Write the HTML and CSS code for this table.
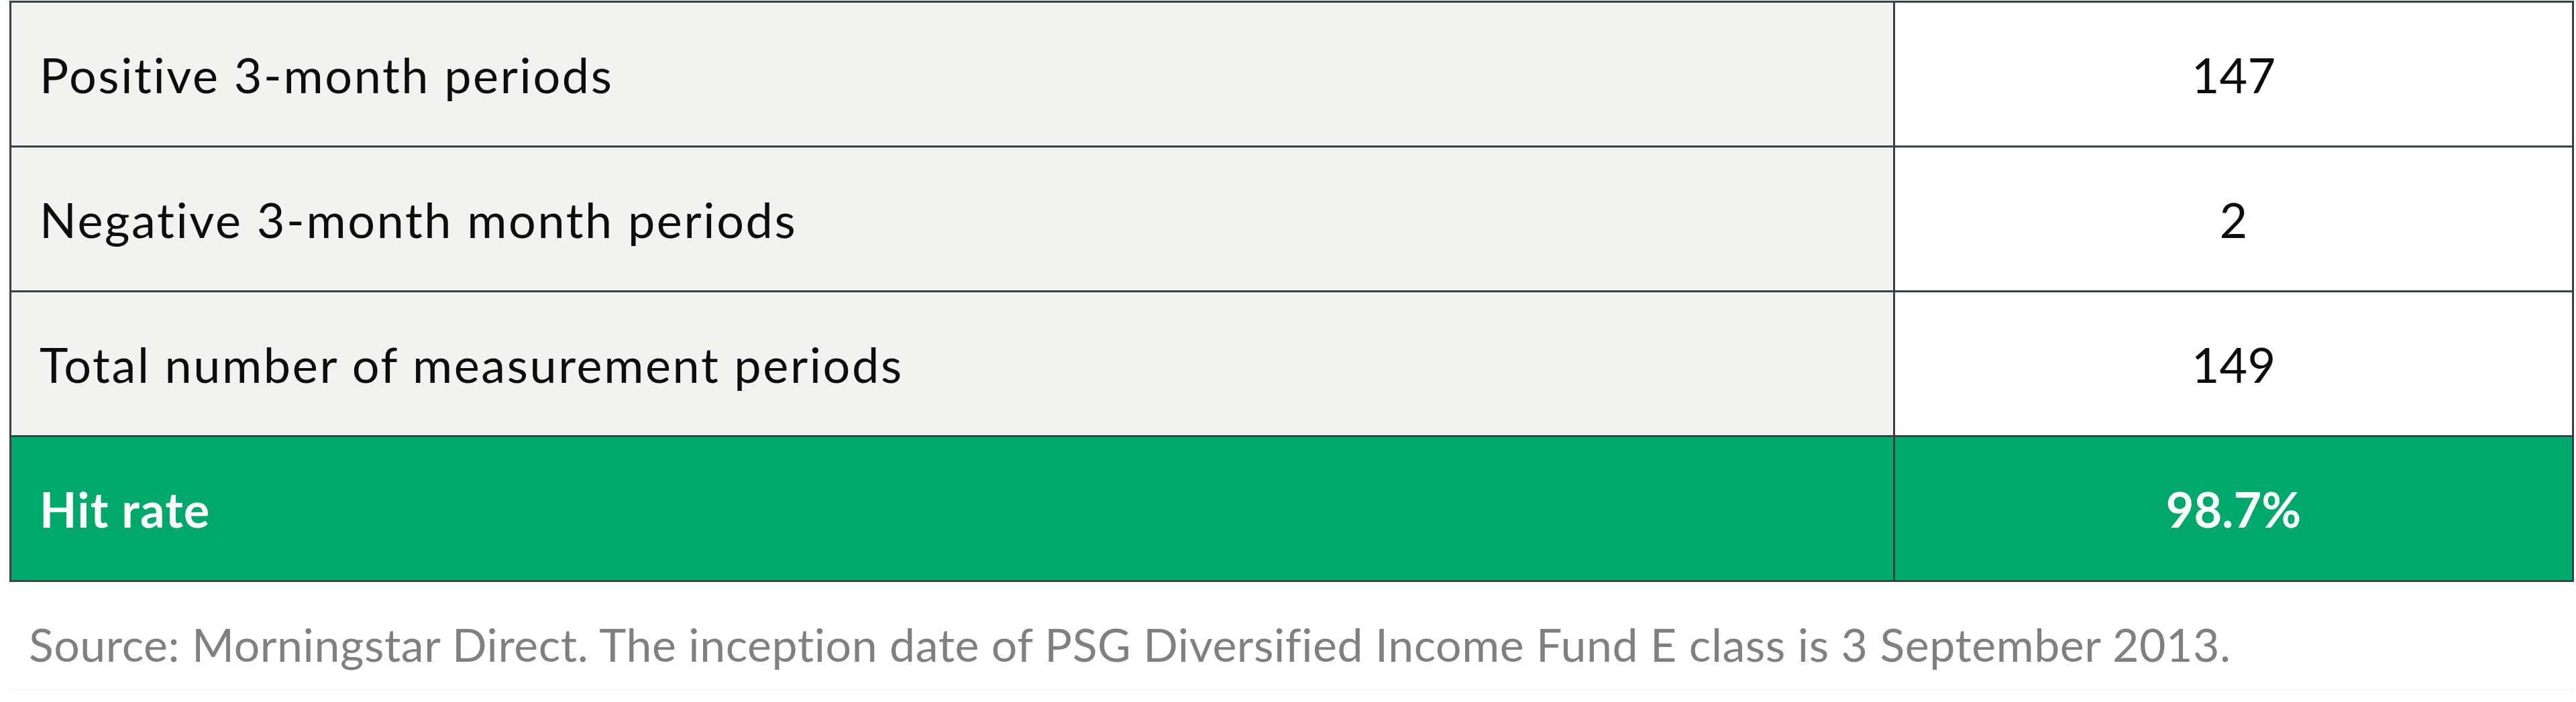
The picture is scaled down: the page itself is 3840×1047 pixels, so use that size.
FILE: index.html
```html
<!DOCTYPE html>
<html lang="en">
<head>
<meta charset="utf-8">
<title>Hit rate</title>
<link rel="stylesheet" href="styles.css">
</head>
<body>
<div class="wrap">
  <table class="stats">
    <tbody>
      <tr class="row">
        <td class="label">Positive 3-month periods</td>
        <td class="value">147</td>
      </tr>
      <tr class="row">
        <td class="label">Negative 3-month month periods</td>
        <td class="value">2</td>
      </tr>
      <tr class="row">
        <td class="label">Total number of measurement periods</td>
        <td class="value">149</td>
      </tr>
      <tr class="row total">
        <td class="label">Hit rate</td>
        <td class="value">98.7%</td>
      </tr>
    </tbody>
  </table>
  <p class="source">Source: Morningstar Direct. The inception date of PSG Diversified Income Fund E class is 3 September 2013.</p>
</div>
</body>
</html>
```
FILE: styles.css
```css
html, body {
  margin: 0;
  padding: 0;
  background: #ffffff;
}
.wrap {
  padding: 1px 0 0 14px;
  width: 3823px;
}
.stats {
  width: 3823px;
  border-collapse: collapse;
  table-layout: fixed;
  font-family: Lato, "Open Sans", sans-serif;
  font-size: 72px;
  color: #0d0d0d;
}
.stats td {
  border: 3px solid #3b4045;
  height: 213px;
  padding: 0;
  vertical-align: middle;
}
.label {
  width: 2763px;
  background: #f2f2f0;
  padding-left: 42px !important;
  text-align: left;
  letter-spacing: 2.6px;
}
.value {
  background: #ffffff;
  text-align: center;
}
.total td {
  background: #00a86b;
  color: #ffffff;
  font-weight: 700;
}
.total .label {
  letter-spacing: 1.2px;
}
.source {
  margin: 0;
  padding: 52px 0 0 28px;
  height: 108px;
  font-family: Lato, "Open Sans", sans-serif;
  font-size: 68px;
  letter-spacing: 0.55px;
  color: #808080;
  border-bottom: 1px solid #f2f2f2;
  border-left: 1px solid #f7f7f7;
}
```
